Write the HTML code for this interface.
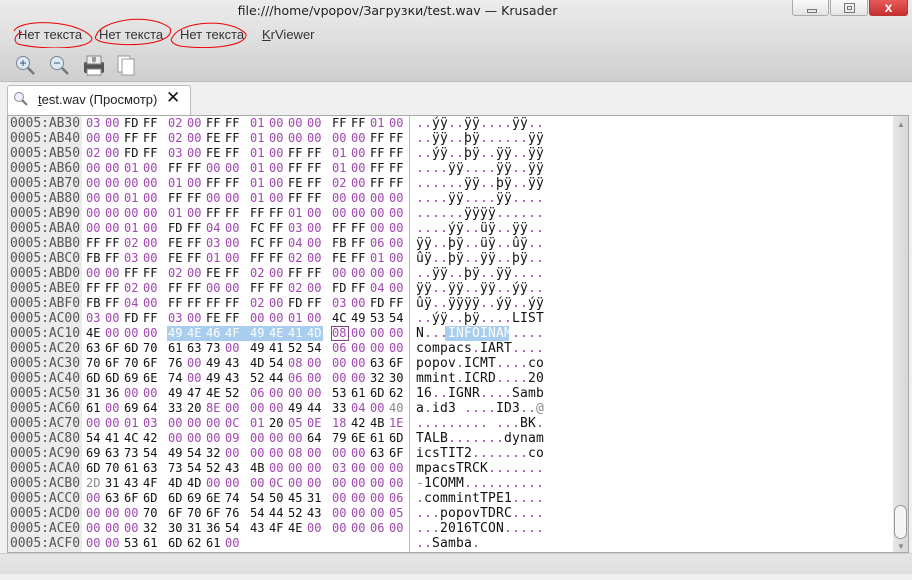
<!DOCTYPE html>
<html><head><meta charset="utf-8"><style>
*{margin:0;padding:0;box-sizing:border-box}
html,body{width:912px;height:580px;overflow:hidden}
body{background:#efefef;font-family:"Liberation Sans","DejaVu Sans",sans-serif;position:relative}
.title{position:absolute;left:0;top:0;width:912px;height:48px;background:linear-gradient(#ececec,#dcdcdc)}
.title .t{position:absolute;left:0;width:795px;top:3px;text-align:center;font-size:13px;color:#222;font-family:"DejaVu Sans",sans-serif;font-size:12.5px}
.wb{position:absolute;top:0;height:17px;border:1px solid #aaa;border-top:none;border-radius:0 0 3px 3px;background:linear-gradient(#fafafa,#e4e4e4)}
.menu{position:absolute;top:27px;font-size:13px;color:#333;font-family:"Liberation Sans",sans-serif}
.tb{position:absolute;left:0;top:48px;width:912px;height:34px;background:linear-gradient(#dadada,#cfcfcf);border-bottom:1px solid #bbb}
.tab{position:absolute;left:7px;top:85px;width:184px;height:32px;background:#fff;border:1px solid #bbb;border-bottom:none;border-radius:3px 3px 0 0}
.frame{position:absolute;left:7px;top:115px;width:902px;height:438px;background:#fff;border:1px solid #aaa}
.addrbg{position:absolute;left:8px;top:116px;width:74px;height:436px;background:#ebebeb}
.r{position:absolute;left:0;height:15px;font-size:12px;line-height:15px;font-family:"DejaVu Sans Mono","Liberation Mono",monospace;white-space:pre}
.r b{position:absolute;left:10px;font-weight:normal;color:#555;font-size:13px;letter-spacing:-.05px}
.h{position:absolute;left:86px}
.h i,.h s,.h u{display:inline-block;width:19px;font-style:normal;text-decoration:none;color:#111}
.h s{color:#a046b0}.h u{color:#888}
.h *:nth-child(4n){margin-right:6px}
.t2{position:absolute;left:416px;font-size:13px;letter-spacing:.17px;color:#111}
.t2 s{text-decoration:none;color:#a046b0}
.sb{position:absolute;left:893px;top:116px;width:15px;height:436px;background:linear-gradient(90deg,#e6e6e6,#d8d8d8)}
</style></head><body>
<div class="title"><div class="t">file:///home/vpopov/Загрузки/test.wav — Krusader</div></div>
<div class="wb" style="left:792px;width:37px;height:16px"><div style="position:absolute;left:14px;top:9px;width:10px;height:4px;border:1px solid #777"></div></div>
<div class="wb" style="left:830px;width:38px;height:16px"><div style="position:absolute;left:13px;top:3px;width:11px;height:10px;border:1px solid #777"></div><div style="position:absolute;left:16px;top:6px;width:5px;height:4px;border:1px solid #777"></div></div>
<div class="wb" style="left:869px;width:39px;height:16px;background:linear-gradient(#e65a5a,#c83030);border-color:#b33"><div style="position:absolute;left:0;width:37px;top:0;text-align:center;color:#fff;font-weight:bold;font-size:14px;line-height:15px">x</div></div>
<div class="menu" style="left:18px">Нет текста</div>
<div class="menu" style="left:99px">Нет текста</div>
<div class="menu" style="left:180px">Нет текста</div>
<div class="menu" style="left:262px"><span style="text-decoration:underline">K</span>rViewer</div>
<svg style="position:absolute;left:0;top:10px" width="260" height="40"><g fill="none" stroke="#e00" stroke-width="1"><path d="M14 21 C20 8 80 10 92 28 C92 40 40 40 18 34 C12 30 16 24 22 22"/><path d="M96 26 C100 10 150 2 170 18 C176 34 130 38 102 32 C96 30 94 28 96 26"/><path d="M172 28 C180 10 232 8 246 24 C248 36 210 40 180 36 C172 34 170 30 172 28"/></g></svg>
<svg style="position:absolute;left:376px;top:50px" width="16" height="20"><path d="M4 1 L4 14 L7 11 L10 17 L12 16 L9 10 L13 10 Z" fill="#222" stroke="#fff" stroke-width=".5"/></svg>
<div class="tb"></div>
<svg style="position:absolute;left:14px;top:54px" width="130" height="26"><g stroke="#557" fill="none"><circle cx="9" cy="9" r="6.5" fill="#dde8f4" stroke="#789"/><path d="M6 9h6M9 6v6" stroke="#456"/><path d="M14 14l6 6" stroke="#777" stroke-width="2.5"/><circle cx="43" cy="9" r="6.5" fill="#dde8f4" stroke="#789"/><path d="M40 9h6" stroke="#456"/><path d="M48 14l6 6" stroke="#777" stroke-width="2.5"/></g><rect x="70" y="8" width="20" height="11" rx="2" fill="#555"/><rect x="73" y="2" width="14" height="8" fill="#eee" stroke="#888"/><rect x="73" y="15" width="14" height="6" fill="#fff" stroke="#888"/><path d="M78 3v4l2 2 2-2v-4" fill="#999"/><rect x="104" y="2" width="12" height="16" fill="#fff" stroke="#999"/><rect x="108" y="5" width="12" height="16" fill="#fff" stroke="#999"/></svg>
<div class="tab"></div>
<svg style="position:absolute;left:13px;top:91px" width="16" height="16"><circle cx="6" cy="6" r="4.5" fill="#eef" stroke="#889"/><path d="M9 9l5 5" stroke="#777" stroke-width="2"/></svg>
<div style="position:absolute;left:38px;top:92px;font-size:13px;color:#222;font-family:'Liberation Sans',sans-serif"><span style="text-decoration:underline">t</span>est.wav (Просмотр)</div>
<div style="position:absolute;left:166px;top:88px;font-size:17px;font-weight:bold;color:#111">✕</div>
<div class="frame"></div>
<div class="addrbg"></div>
<div style="position:absolute;left:409px;top:116px;width:1px;height:436px;background:#bbb"></div>
<div style="position:absolute;left:167px;top:326px;width:156px;height:15px;background:#a8cdee"></div>
<div style="position:absolute;left:445px;top:326px;width:64px;height:15px;background:#a8cdee"></div>
<div style="position:absolute;left:331px;top:326px;width:18px;height:15px;border:1px solid #8a3a90"></div>
<div class="sb"><div style="position:absolute;left:4px;top:4px;font-size:8px;color:#888">▲</div><div style="position:absolute;left:1px;top:389px;width:13px;height:34px;border:1px solid #999;border-radius:7px;background:#f4f4f4"></div><div style="position:absolute;left:4px;font-size:8px;color:#888;top:426px">▼</div></div>
<div style="position:absolute;left:0;top:553px;width:912px;height:21px;background:linear-gradient(#e6e6e6,#dedede);border-top:1px solid #ccc"></div>

<div class="r" style="top:116px"><b>0005:AB30</b><span class="h"><s>03</s><s>00</s><i>FD</i><i>FF</i><s>02</s><s>00</s><i>FF</i><i>FF</i><s>01</s><s>00</s><s>00</s><s>00</s><i>FF</i><i>FF</i><s>01</s><s>00</s></span><span class="t2"><s>..</s>ýÿ<s>..</s>ÿÿ<s>....</s>ÿÿ<s>..</s></span></div>
<div class="r" style="top:131px"><b>0005:AB40</b><span class="h"><s>00</s><s>00</s><i>FF</i><i>FF</i><s>02</s><s>00</s><i>FE</i><i>FF</i><s>01</s><s>00</s><s>00</s><s>00</s><s>00</s><s>00</s><i>FF</i><i>FF</i></span><span class="t2"><s>..</s>ÿÿ<s>..</s>þÿ<s>......</s>ÿÿ</span></div>
<div class="r" style="top:146px"><b>0005:AB50</b><span class="h"><s>02</s><s>00</s><i>FD</i><i>FF</i><s>03</s><s>00</s><i>FE</i><i>FF</i><s>01</s><s>00</s><i>FF</i><i>FF</i><s>01</s><s>00</s><i>FF</i><i>FF</i></span><span class="t2"><s>..</s>ýÿ<s>..</s>þÿ<s>..</s>ÿÿ<s>..</s>ÿÿ</span></div>
<div class="r" style="top:161px"><b>0005:AB60</b><span class="h"><s>00</s><s>00</s><s>01</s><s>00</s><i>FF</i><i>FF</i><s>00</s><s>00</s><s>01</s><s>00</s><i>FF</i><i>FF</i><s>01</s><s>00</s><i>FF</i><i>FF</i></span><span class="t2"><s>....</s>ÿÿ<s>....</s>ÿÿ<s>..</s>ÿÿ</span></div>
<div class="r" style="top:176px"><b>0005:AB70</b><span class="h"><s>00</s><s>00</s><s>00</s><s>00</s><s>01</s><s>00</s><i>FF</i><i>FF</i><s>01</s><s>00</s><i>FE</i><i>FF</i><s>02</s><s>00</s><i>FF</i><i>FF</i></span><span class="t2"><s>......</s>ÿÿ<s>..</s>þÿ<s>..</s>ÿÿ</span></div>
<div class="r" style="top:191px"><b>0005:AB80</b><span class="h"><s>00</s><s>00</s><s>01</s><s>00</s><i>FF</i><i>FF</i><s>00</s><s>00</s><s>01</s><s>00</s><i>FF</i><i>FF</i><s>00</s><s>00</s><s>00</s><s>00</s></span><span class="t2"><s>....</s>ÿÿ<s>....</s>ÿÿ<s>....</s></span></div>
<div class="r" style="top:206px"><b>0005:AB90</b><span class="h"><s>00</s><s>00</s><s>00</s><s>00</s><s>01</s><s>00</s><i>FF</i><i>FF</i><i>FF</i><i>FF</i><s>01</s><s>00</s><s>00</s><s>00</s><s>00</s><s>00</s></span><span class="t2"><s>......</s>ÿÿÿÿ<s>......</s></span></div>
<div class="r" style="top:221px"><b>0005:ABA0</b><span class="h"><s>00</s><s>00</s><s>01</s><s>00</s><i>FD</i><i>FF</i><s>04</s><s>00</s><i>FC</i><i>FF</i><s>03</s><s>00</s><i>FF</i><i>FF</i><s>00</s><s>00</s></span><span class="t2"><s>....</s>ýÿ<s>..</s>üÿ<s>..</s>ÿÿ<s>..</s></span></div>
<div class="r" style="top:236px"><b>0005:ABB0</b><span class="h"><i>FF</i><i>FF</i><s>02</s><s>00</s><i>FE</i><i>FF</i><s>03</s><s>00</s><i>FC</i><i>FF</i><s>04</s><s>00</s><i>FB</i><i>FF</i><s>06</s><s>00</s></span><span class="t2">ÿÿ<s>..</s>þÿ<s>..</s>üÿ<s>..</s>ûÿ<s>..</s></span></div>
<div class="r" style="top:251px"><b>0005:ABC0</b><span class="h"><i>FB</i><i>FF</i><s>03</s><s>00</s><i>FE</i><i>FF</i><s>01</s><s>00</s><i>FF</i><i>FF</i><s>02</s><s>00</s><i>FE</i><i>FF</i><s>01</s><s>00</s></span><span class="t2">ûÿ<s>..</s>þÿ<s>..</s>ÿÿ<s>..</s>þÿ<s>..</s></span></div>
<div class="r" style="top:266px"><b>0005:ABD0</b><span class="h"><s>00</s><s>00</s><i>FF</i><i>FF</i><s>02</s><s>00</s><i>FE</i><i>FF</i><s>02</s><s>00</s><i>FF</i><i>FF</i><s>00</s><s>00</s><s>00</s><s>00</s></span><span class="t2"><s>..</s>ÿÿ<s>..</s>þÿ<s>..</s>ÿÿ<s>....</s></span></div>
<div class="r" style="top:281px"><b>0005:ABE0</b><span class="h"><i>FF</i><i>FF</i><s>02</s><s>00</s><i>FF</i><i>FF</i><s>00</s><s>00</s><i>FF</i><i>FF</i><s>02</s><s>00</s><i>FD</i><i>FF</i><s>04</s><s>00</s></span><span class="t2">ÿÿ<s>..</s>ÿÿ<s>..</s>ÿÿ<s>..</s>ýÿ<s>..</s></span></div>
<div class="r" style="top:296px"><b>0005:ABF0</b><span class="h"><i>FB</i><i>FF</i><s>04</s><s>00</s><i>FF</i><i>FF</i><i>FF</i><i>FF</i><s>02</s><s>00</s><i>FD</i><i>FF</i><s>03</s><s>00</s><i>FD</i><i>FF</i></span><span class="t2">ûÿ<s>..</s>ÿÿÿÿ<s>..</s>ýÿ<s>..</s>ýÿ</span></div>
<div class="r" style="top:311px"><b>0005:AC00</b><span class="h"><s>03</s><s>00</s><i>FD</i><i>FF</i><s>03</s><s>00</s><i>FE</i><i>FF</i><s>00</s><s>00</s><s>01</s><s>00</s><i>4C</i><i>49</i><i>53</i><i>54</i></span><span class="t2"><s>..</s>ýÿ<s>..</s>þÿ<s>....</s>LIST</span></div>
<div class="r" style="top:326px"><b>0005:AC10</b><span class="h"><i>4E</i><s>00</s><s>00</s><s>00</s><i style="color:#fff">49</i><i style="color:#fff">4E</i><i style="color:#fff">46</i><i style="color:#fff">4F</i><i style="color:#fff">49</i><i style="color:#fff">4E</i><i style="color:#fff">41</i><i style="color:#fff">4D</i><s>08</s><s>00</s><s>00</s><s>00</s></span><span class="t2">N<s>...</s><span style="color:#fff">INFOINAM</span><s>....</s></span></div>
<div class="r" style="top:341px"><b>0005:AC20</b><span class="h"><i>63</i><i>6F</i><i>6D</i><i>70</i><i>61</i><i>63</i><i>73</i><s>00</s><i>49</i><i>41</i><i>52</i><i>54</i><s>06</s><s>00</s><s>00</s><s>00</s></span><span class="t2">compacs<s>.</s>IART<s>....</s></span></div>
<div class="r" style="top:356px"><b>0005:AC30</b><span class="h"><i>70</i><i>6F</i><i>70</i><i>6F</i><i>76</i><s>00</s><i>49</i><i>43</i><i>4D</i><i>54</i><s>08</s><s>00</s><s>00</s><s>00</s><i>63</i><i>6F</i></span><span class="t2">popov<s>.</s>ICMT<s>....</s>co</span></div>
<div class="r" style="top:371px"><b>0005:AC40</b><span class="h"><i>6D</i><i>6D</i><i>69</i><i>6E</i><i>74</i><s>00</s><i>49</i><i>43</i><i>52</i><i>44</i><s>06</s><s>00</s><s>00</s><s>00</s><i>32</i><i>30</i></span><span class="t2">mmint<s>.</s>ICRD<s>....</s>20</span></div>
<div class="r" style="top:386px"><b>0005:AC50</b><span class="h"><i>31</i><i>36</i><s>00</s><s>00</s><i>49</i><i>47</i><i>4E</i><i>52</i><s>06</s><s>00</s><s>00</s><s>00</s><i>53</i><i>61</i><i>6D</i><i>62</i></span><span class="t2">16<s>..</s>IGNR<s>....</s>Samb</span></div>
<div class="r" style="top:401px"><b>0005:AC60</b><span class="h"><i>61</i><s>00</s><i>69</i><i>64</i><i>33</i><i>20</i><s>8E</s><s>00</s><s>00</s><s>00</s><i>49</i><i>44</i><i>33</i><s>04</s><s>00</s><u>40</u></span><span class="t2">a<s>.</s>id3 <s>....</s>ID3<s>..</s><span style="color:#888">@</span></span></div>
<div class="r" style="top:416px"><b>0005:AC70</b><span class="h"><s>00</s><s>00</s><s>01</s><s>03</s><s>00</s><s>00</s><s>00</s><s>0C</s><s>01</s><i>20</i><s>05</s><s>0E</s><s>18</s><i>42</i><i>4B</i><s>1E</s></span><span class="t2"><s>.........</s> <s>...</s>BK<s>.</s></span></div>
<div class="r" style="top:431px"><b>0005:AC80</b><span class="h"><i>54</i><i>41</i><i>4C</i><i>42</i><s>00</s><s>00</s><s>00</s><s>09</s><s>00</s><s>00</s><s>00</s><i>64</i><i>79</i><i>6E</i><i>61</i><i>6D</i></span><span class="t2">TALB<s>.......</s>dynam</span></div>
<div class="r" style="top:446px"><b>0005:AC90</b><span class="h"><i>69</i><i>63</i><i>73</i><i>54</i><i>49</i><i>54</i><i>32</i><s>00</s><s>00</s><s>00</s><s>08</s><s>00</s><s>00</s><s>00</s><i>63</i><i>6F</i></span><span class="t2">icsTIT2<s>.......</s>co</span></div>
<div class="r" style="top:461px"><b>0005:ACA0</b><span class="h"><i>6D</i><i>70</i><i>61</i><i>63</i><i>73</i><i>54</i><i>52</i><i>43</i><i>4B</i><s>00</s><s>00</s><s>00</s><s>03</s><s>00</s><s>00</s><s>00</s></span><span class="t2">mpacsTRCK<s>.......</s></span></div>
<div class="r" style="top:476px"><b>0005:ACB0</b><span class="h"><u>2D</u><i>31</i><i>43</i><i>4F</i><i>4D</i><i>4D</i><s>00</s><s>00</s><s>00</s><s>0C</s><s>00</s><s>00</s><s>00</s><s>00</s><s>00</s><s>00</s></span><span class="t2"><span style="color:#888">-</span>1COMM<s>..........</s></span></div>
<div class="r" style="top:491px"><b>0005:ACC0</b><span class="h"><s>00</s><i>63</i><i>6F</i><i>6D</i><i>6D</i><i>69</i><i>6E</i><i>74</i><i>54</i><i>50</i><i>45</i><i>31</i><s>00</s><s>00</s><s>00</s><s>06</s></span><span class="t2"><s>.</s>commintTPE1<s>....</s></span></div>
<div class="r" style="top:506px"><b>0005:ACD0</b><span class="h"><s>00</s><s>00</s><s>00</s><i>70</i><i>6F</i><i>70</i><i>6F</i><i>76</i><i>54</i><i>44</i><i>52</i><i>43</i><s>00</s><s>00</s><s>00</s><s>05</s></span><span class="t2"><s>...</s>popovTDRC<s>....</s></span></div>
<div class="r" style="top:521px"><b>0005:ACE0</b><span class="h"><s>00</s><s>00</s><s>00</s><i>32</i><i>30</i><i>31</i><i>36</i><i>54</i><i>43</i><i>4F</i><i>4E</i><s>00</s><s>00</s><s>00</s><s>06</s><s>00</s></span><span class="t2"><s>...</s>2016TCON<s>.....</s></span></div>
<div class="r" style="top:536px"><b>0005:ACF0</b><span class="h"><s>00</s><s>00</s><i>53</i><i>61</i><i>6D</i><i>62</i><i>61</i><s>00</s></span><span class="t2"><s>..</s>Samba<s>.</s></span></div>
</body></html>
